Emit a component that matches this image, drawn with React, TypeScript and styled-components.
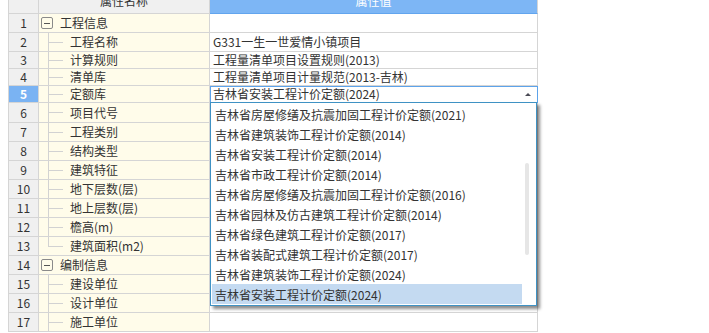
import React from "react";
import styled, { createGlobalStyle } from "styled-components";

const Global = createGlobalStyle`
  html, body { margin: 0; padding: 0; background: #ffffff; overflow: hidden; }
  body { font-family: "Noto Sans CJK SC", "Noto Sans", sans-serif; font-size: 12px; color: #333; }
`;

const GRID = "#d5d5d5";

const Page = styled.div`
  position: relative;
  padding-left: 8px;
  width: 709px;
  height: 333px;
  box-sizing: border-box;
  overflow: hidden;
`;

const Table = styled.div`
  width: 530px;
  margin-top: -11px;
  border-left: 1px solid ${GRID};
  box-sizing: border-box;
  display: flex;
  flex-direction: column;
`;

const Row = styled.div<{ $h: number }>`
  display: grid;
  grid-template-columns: 30px 171px 328px;
  height: ${(p) => p.$h}px;
`;

const Cell = styled.div`
  box-sizing: border-box;
  border-right: 1px solid ${GRID};
  border-bottom: 1px solid ${GRID};
  display: flex;
  align-items: center;
  white-space: nowrap;
  overflow: hidden;
  line-height: 1;
`;

const HeadNum = styled(Cell)`
  background: #f0f0f0;
`;

const HeadName = styled(Cell)`
  background: #f0f0f0;
  justify-content: center;
  color: #333;
`;

const HeadValue = styled(Cell)`
  background: #7db6f5;
  border-bottom-color: #62a5ee;
  justify-content: center;
  color: #ffffff;
`;

const NumCell = styled(Cell)<{ $active?: boolean }>`
  justify-content: center;
  background: ${(p) => (p.$active ? "#7ab3f3" : "#f0f0f0")};
  color: ${(p) => (p.$active ? "#ffffff" : "#333")};
  font-weight: ${(p) => (p.$active ? 700 : 400)};
`;

const NameCell = styled(Cell)`
  background: #fffcea;
  align-items: stretch;
`;

const ValueCell = styled(Cell)<{ $active?: boolean }>`
  background: #ffffff;
  padding-left: 3px;
  color: #333;
  ${(p) =>
    p.$active
      ? `outline: 1px solid #5da3ea; outline-offset: -1px; border-bottom-color: #5da3ea;`
      : ""}
`;

const ToggleBox = styled.span`
  align-self: center;
  box-sizing: border-box;
  width: 12px;
  height: 12px;
  margin-left: 2px;
  margin-right: 7px;
  border: 1px solid #8a8a8a;
  border-radius: 2px;
  display: flex;
  align-items: center;
  justify-content: center;
  &::before {
    content: "";
    width: 6px;
    height: 1px;
    background: #555;
  }
`;

const Guide = styled.span<{ $last?: boolean }>`
  width: 15px;
  margin-left: 9px;
  margin-right: 7px;
  flex: none;
  background:
    linear-gradient(#d2d2d2, #d2d2d2) 0 50% / 100% 1px no-repeat,
    linear-gradient(#d2d2d2, #d2d2d2) 0 0 / 1px ${(p) => (p.$last ? "50%" : "100%")} no-repeat;
`;

const Label = styled.span`
  align-self: center;
  color: #333;
`;

const Arrow = styled.span`
  margin-left: auto;
  margin-right: 6px;
  width: 0;
  height: 0;
  border-left: 3px solid transparent;
  border-right: 3px solid transparent;
  border-bottom: 3px solid #4a4a55;
`;

const Dropdown = styled.div`
  position: absolute;
  left: 210px;
  top: 102px;
  width: 327px;
  box-sizing: border-box;
  border: 1px solid #3f92c4;
  padding: 1px;
  background: #ffffff;
  box-shadow: 3px 3px 3px rgba(0, 0, 0, 0.45);
  display: flex;
`;

const Items = styled.div`
  width: 310px;
  display: flex;
  flex-direction: column;
`;

const Item = styled.div<{ $selected?: boolean }>`
  height: 20px;
  display: flex;
  align-items: center;
  padding-left: 3px;
  white-space: nowrap;
  color: #333;
  background: ${(p) => (p.$selected ? "#c4daf1" : "transparent")};
`;

const Track = styled.div`
  flex: 1;
  padding-top: 59px;
  padding-left: 3px;
`;

const Thumb = styled.div`
  width: 4px;
  height: 92px;
  border-radius: 2px;
  background: #e6e6e6;
`;

type RowData = {
  n: number;
  label: string;
  value?: string;
  group?: boolean;
  last?: boolean;
  active?: boolean;
  h: number;
};

const rows: RowData[] = [
  { n: 1, label: "工程信息", group: true, h: 19 },
  { n: 2, label: "工程名称", value: "G331一生一世爱情小镇项目", h: 19 },
  { n: 3, label: "计算规则", value: "工程量清单项目设置规则(2013)", h: 17 },
  { n: 4, label: "清单库", value: "工程量清单项目计量规范(2013-吉林)", h: 17 },
  { n: 5, label: "定额库", value: "吉林省安装工程计价定额(2024)", active: true, h: 17 },
  { n: 6, label: "项目代号", h: 20 },
  { n: 7, label: "工程类别", h: 19 },
  { n: 8, label: "结构类型", h: 19 },
  { n: 9, label: "建筑特征", h: 19 },
  { n: 10, label: "地下层数(层)", h: 19 },
  { n: 11, label: "地上层数(层)", h: 19 },
  { n: 12, label: "檐高(m)", h: 19 },
  { n: 13, label: "建筑面积(m2)", last: true, h: 19 },
  { n: 14, label: "编制信息", group: true, h: 19 },
  { n: 15, label: "建设单位", h: 19 },
  { n: 16, label: "设计单位", h: 19 },
  { n: 17, label: "施工单位", h: 19 },
];

const options = [
  "吉林省房屋修缮及抗震加固工程计价定额(2021)",
  "吉林省建筑装饰工程计价定额(2014)",
  "吉林省安装工程计价定额(2014)",
  "吉林省市政工程计价定额(2014)",
  "吉林省房屋修缮及抗震加固工程计价定额(2016)",
  "吉林省园林及仿古建筑工程计价定额(2014)",
  "吉林省绿色建筑工程计价定额(2017)",
  "吉林省装配式建筑工程计价定额(2017)",
  "吉林省建筑装饰工程计价定额(2024)",
  "吉林省安装工程计价定额(2024)",
];

export default function App() {
  return (
    <>
      <Global />
      <Page>
        <Table>
          <Row $h={25}>
            <HeadNum />
            <HeadName>属性名称</HeadName>
            <HeadValue>属性值</HeadValue>
          </Row>
          {rows.map((r) => (
            <Row key={r.n} $h={r.h}>
              <NumCell $active={r.active}>{r.n}</NumCell>
              <NameCell>
                {r.group ? <ToggleBox /> : <Guide $last={r.last} />}
                <Label>{r.label}</Label>
              </NameCell>
              <ValueCell $active={r.active}>
                {r.value}
                {r.active && <Arrow />}
              </ValueCell>
            </Row>
          ))}
        </Table>
        <Dropdown>
          <Items>
            {options.map((o, i) => (
              <Item key={i} $selected={i === options.length - 1}>
                {o}
              </Item>
            ))}
          </Items>
          <Track>
            <Thumb />
          </Track>
        </Dropdown>
      </Page>
    </>
  );
}
